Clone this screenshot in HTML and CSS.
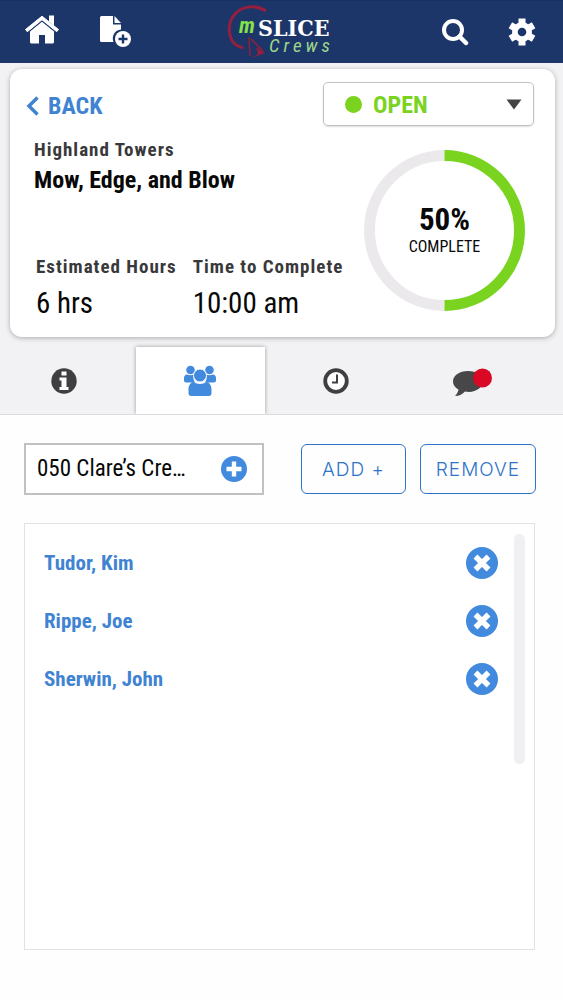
FILE: index.html
```html
<!DOCTYPE html>
<html lang="en">
<head>
<meta charset="utf-8">
<meta name="viewport" content="width=device-width, initial-scale=1">
<title>mSlice Crews</title>
<link rel="stylesheet" href="styles.css">
</head>
<body>
<header class="topbar">
  <div class="group left">
    <button class="icon-btn" aria-label="Home">
      <svg width="36" height="36" viewBox="0 0 36 36" fill="#fff"><path d="M1.500 15.500 18 2.200l16.500 13.300-1.800 2.200L18 5.800 3.300 17.700z" stroke="#fff" stroke-width="1" stroke-linejoin="round"/><path d="M25 1.500h5v10l-5-4z"/><path d="M6 17.500 18 7.800l12 9.700V28a1.500 1.500 0 0 1-1.500 1.500H21V21h-6v8.500H7.500A1.500 1.500 0 0 1 6 28z"/></svg>
    </button>
    <button class="icon-btn" aria-label="New document">
      <svg width="34" height="36" viewBox="0 0 34 36" fill="#fff"><path d="M3.500 2H15v8.500h8v5a9 9 0 0 0-7.500 12.500h-12A1.500 1.500 0 0 1 2 26.500v-23A1.500 1.500 0 0 1 3.500 2z"/><path d="M16.500 2 23 9h-6.500z"/><circle cx="25" cy="25" r="8"/><path d="M25 20.500v9M20.500 25h9" stroke="#1c3669" stroke-width="2.400"/></svg>
    </button>
  </div>
  <svg class="logo" width="108" height="56" viewBox="0 0 108 56" role="img" aria-label="mSLICE Crews">
    <path d="M40 7C31 1 17 1 9 10C0 20 2 37 12 42L17 44" fill="none" stroke="#951f3d" stroke-width="3"/>
    <path d="M23 33 24 52M25 35 37 47" fill="none" stroke="#951f3d" stroke-width="1.500"/>
    <path d="M26 54 32 50 30 43 39 49z" fill="#951f3d"/>
    <text class="logo-m" x="13" y="29">m</text>
    <text class="logo-slice" x="32" y="32">SLICE</text>
    <text class="logo-crews" x="43" y="48">Crews</text>
  </svg>
  <div class="group right">
    <button class="icon-btn" aria-label="Search">
      <svg width="28" height="28" viewBox="0 0 28 28" fill="none" stroke="#fff"><circle cx="12" cy="12" r="9" stroke-width="4"/><path d="m18.500 18.500 6.500 6.500" stroke-width="4.500" stroke-linecap="round"/></svg>
    </button>
    <button class="icon-btn" aria-label="Settings">
      <svg width="28" height="28" viewBox="0 0 28 28" fill="#fff"><g stroke="#fff" stroke-width="7"><path d="M14 .500v27"/><path d="M2.400 7.300 25.600 20.700M25.600 7.300 2.400 20.700" /></g><circle cx="14" cy="14" r="10"/><circle cx="14" cy="14" r="4.300" fill="#1c3669"/></svg>
    </button>
  </div>
</header>

<main>
  <section class="summary">
    <div class="card">
      <div class="card-head">
        <a class="back" href="#"><svg width="13" height="20" viewBox="0 0 13 20" fill="none" stroke="#3f83d2" stroke-width="3.500"><path d="M11.500 1.500 3 10l8.500 8.500"/></svg>BACK</a>
        <label class="status">
          <span class="dot"></span>
          <select aria-label="Status"><option>OPEN</option><option>CLOSED</option></select>
          <svg width="16" height="11" viewBox="0 0 16 11"><path d="M.500.500h15L8 10.500z" fill="#444"/></svg>
        </label>
      </div>
      <div class="card-body">
        <div class="job">
          <p class="site">Highland Towers</p>
          <h1 class="task">Mow, Edge, and Blow</h1>
          <dl class="facts">
            <div><dt>Estimated Hours</dt><dd>6 hrs</dd></div>
            <div><dt>Time to Complete</dt><dd>10:00 am</dd></div>
          </dl>
        </div>
        <div class="progress">
          <svg class="ring" width="161" height="161" viewBox="0 0 162 162" fill="none" stroke-width="11"><path d="M81 5.500a75.500 75.500 0 0 0 0 151" stroke="#ebe9ec"/><path d="M81 5.500a75.500 75.500 0 0 1 0 151" stroke="#7ad31f"/></svg>
          <div class="progress-text"><strong>50%</strong><span>COMPLETE</span></div>
        </div>
      </div>
    </div>
    <nav class="tabs" aria-label="Job sections">
      <button class="tab" aria-label="Info"><svg width="26" height="26" viewBox="0 0 26 26"><circle cx="13" cy="13" r="12.700" fill="#3f3e41"/><path d="M10.500 3.500h5v4h-5zM8.500 9.500h7V19h2v3h-9v-3h2v-6.500h-2z" fill="#fff"/></svg></button>
      <button class="tab active" aria-label="Crew"><svg width="32" height="32" viewBox="0 0 32 32" fill="#418ade"><circle cx="6.500" cy="5" r="4.300"/><circle cx="25.500" cy="5" r="4.300"/><path d="M3 9.500c2 1 5 1 7 0l-.5 3c0 2 .5 3.500 1.500 5H2a2 2 0 0 1-2-2V13c0-2 1.500-3.500 3-3.500zM29 9.500c-2 1-5 1-7 0l.5 3c0 2-.5 3.500-1.500 5h9a2 2 0 0 0 2-2V13c0-2-1.500-3.500-3-3.500z"/><circle cx="16" cy="10.500" r="6.500" stroke="#fff"/><path d="M9.500 17c4 2.500 9 2.500 13 0 3.500.5 5 4 5 7.500v3.500a3 3 0 0 1-3 3h-17a3 3 0 0 1-3-3v-3.500c0-3.500 1.500-7 5-7.500z"/></svg></button>
      <button class="tab" aria-label="Time"><svg width="26" height="26" viewBox="0 0 26 26" fill="none" stroke="#3f3e41"><circle cx="13" cy="13" r="10.800" stroke-width="3.800" fill="#fff"/><path d="M14 6.500v8H9" stroke-width="2"/></svg></button>
      <button class="tab" aria-label="Messages, unread"><svg width="40" height="30" viewBox="0 0 40 30"><path d="M16 5c8.500 0 15 4.500 15 10.500S24.500 25.500 17 26c-1.500 0-3-.2-4-.5C10.500 28 7.500 30 3 30c2-2 3-4 3.500-6.500C3 21.500 1 19 1 15.500 1 9.500 7.500 5 16 5z" fill="#474648"/><circle cx="30.500" cy="12" r="9.500" fill="#d90824"/></svg></button>
    </nav>
  </section>

  <section class="crew">
    <div class="controls">
      <div class="picker">
        <input type="text" aria-label="Crew" value="050 Clare’s Cre…">
        <button class="round" aria-label="Choose crew"><svg width="26" height="26" viewBox="0 0 26 26"><circle cx="13" cy="13" r="13" fill="#418ade"/><path d="M13 5.500v15M5.500 13h15" stroke="#fff" stroke-width="4.400"/></svg></button>
      </div>
      <div class="actions">
        <button class="action add">ADD +</button>
        <button class="action remove">REMOVE</button>
      </div>
    </div>
    <div class="list-box">
      <ul class="members">
        <li><a href="#">Tudor, Kim</a><button class="round" aria-label="Remove Tudor, Kim"><svg width="32" height="32" viewBox="0 0 32 32"><circle cx="16" cy="16" r="16" fill="#418ade"/><path d="m9.500 9.500 13 13m0-13-13 13" stroke="#fff" stroke-width="5.500"/></svg></button></li>
        <li><a href="#">Rippe, Joe</a><button class="round" aria-label="Remove Rippe, Joe"><svg width="32" height="32" viewBox="0 0 32 32"><circle cx="16" cy="16" r="16" fill="#418ade"/><path d="m9.500 9.500 13 13m0-13-13 13" stroke="#fff" stroke-width="5.500"/></svg></button></li>
        <li><a href="#">Sherwin, John</a><button class="round" aria-label="Remove Sherwin, John"><svg width="32" height="32" viewBox="0 0 32 32"><circle cx="16" cy="16" r="16" fill="#418ade"/><path d="m9.500 9.500 13 13m0-13-13 13" stroke="#fff" stroke-width="5.500"/></svg></button></li>
      </ul>
      <div class="scroll-thumb"></div>
    </div>
  </section>
</main>
</body>
</html>
```

FILE: styles.css
```css
* { box-sizing: border-box; }
body { margin: 0; background: #fefefe; color: #080808; font-family: "Roboto Condensed", "Liberation Sans Narrow", Roboto, sans-serif; }
button { padding: 0; border: 0; background: none; font: inherit; color: inherit; cursor: pointer; }
svg { display: block; }
p, h1, dl, dd, ul { margin: 0; padding: 0; }
a { color: #3f83d2; text-decoration: none; }

.topbar { height: 63px; display: grid; grid-template-columns: 1fr auto 1fr; align-items: center; padding: 0 27px 0 24px; background: #1c3669; border-top: 1px solid #16305f; }
.group { display: flex; align-items: center; }
.left { gap: 38px; }
.right { gap: 39px; justify-content: flex-end; }
.logo-m { font: italic bold 22px "Roboto Condensed", "Liberation Sans Narrow", Roboto, sans-serif; fill: #85e04a; }
.logo-slice { font: bold 23px "DejaVu Serif Condensed", "Liberation Serif", serif; fill: #fff; }
.logo-crews { font: italic 19px "Roboto Condensed", "Liberation Sans Narrow", Roboto, sans-serif; fill: #9ed68c; letter-spacing: 4px; }

.summary { background: #f2f1f4; padding-top: 6px; border-bottom: 1px solid #dbdadd; }
.card { margin: 0 8px 0 10px; background: #fff; border-radius: 12px; box-shadow: 0 1px 5px #aaa; padding: 13px 21px 10px 16px; }
.card-head { display: flex; justify-content: space-between; align-items: flex-start; }
.back { display: flex; align-items: center; gap: 9px; padding-top: 8px; font-size: 24px; line-height: 32px; font-weight: 700; }
.status { display: flex; align-items: center; gap: 11px; width: 211px; height: 44px; padding: 0 11px 0 21px; border: 1px solid #c2c1c4; border-radius: 5px; box-shadow: 0 1px 2px #ddd; }
.dot { width: 17px; height: 17px; border-radius: 50%; background: #7ad31f; }
.status select { flex: 1; min-width: 0; appearance: none; border: 0; padding: 2px 0 0; background: none; font: 700 24px/30px "Roboto Condensed", "Liberation Sans Narrow", Roboto, sans-serif; color: #7ad31f; }
.card-body { display: flex; justify-content: space-between; }
.job { padding: 12px 0 0 8px; }
.site { font-size: 19px; line-height: 24px; font-weight: 700; letter-spacing: 1px; color: #39383b; }
.task { font-size: 24px; line-height: 36px; font-weight: 700; }
.facts { display: flex; gap: 14px; padding-top: 57px; }
.facts div { padding-left: 2px; }
.facts dt { font-size: 19px; line-height: 24px; font-weight: 700; letter-spacing: 1px; color: #39383b; white-space: nowrap; }
.facts dd { font-size: 29px; line-height: 48px; white-space: nowrap; }
.progress { display: grid; place-items: center; align-content: start; padding-top: 24px; margin-right: 9px; }
.progress > * { grid-area: 1 / 1; }
.progress-text { display: flex; flex-direction: column; align-items: center; }
.progress-text strong { font-size: 31px; line-height: 32px; }
.progress-text span { font-size: 16px; line-height: 22px; }

.tabs { display: grid; grid-template-columns: repeat(4, 1fr); gap: 7px; height: 67px; margin-top: 10px; padding-right: 27px; }
.tab { display: grid; place-items: center; }
.tab.active { background: #fff; box-shadow: 0 0 4px #999; clip-path: inset(-4px -4px 0 -4px); }

.crew { padding: 28px 27px 50px 24px; }
.controls { display: flex; justify-content: space-between; align-items: center; }
.picker { display: flex; align-items: center; width: 240px; height: 52px; padding: 0 15px 0 11px; border: 2px solid #c2c1c2; background: #fff; }
.picker input { flex: 1; min-width: 0; border: 0; padding: 0; background: none; font: 23px/32px "Roboto Condensed", "Liberation Sans Narrow", Roboto, sans-serif; color: #080808; }
.actions { display: flex; gap: 14px; }
.action { height: 50px; border: 1px solid #2d73c8; border-radius: 6px; color: #2d73c8; font: 300 19px/24px Inter, sans-serif; letter-spacing: 1px; padding-top: 2px; }
.add { width: 105px; }
.remove { width: 116px; }
.list-box { display: flex; gap: 16px; min-height: 427px; margin: 28px 1px 0 0; padding: 10px 9px 10px 19px; border: 1px solid #e2e1e4; background: #fff; }
.members { flex: 1; list-style: none; }
.members li { display: flex; justify-content: space-between; align-items: center; height: 58px; }
.members a { font-size: 21px; font-weight: 700; }
.scroll-thumb { width: 11px; height: 230px; border-radius: 6px; background: #f0eff2; }
```
